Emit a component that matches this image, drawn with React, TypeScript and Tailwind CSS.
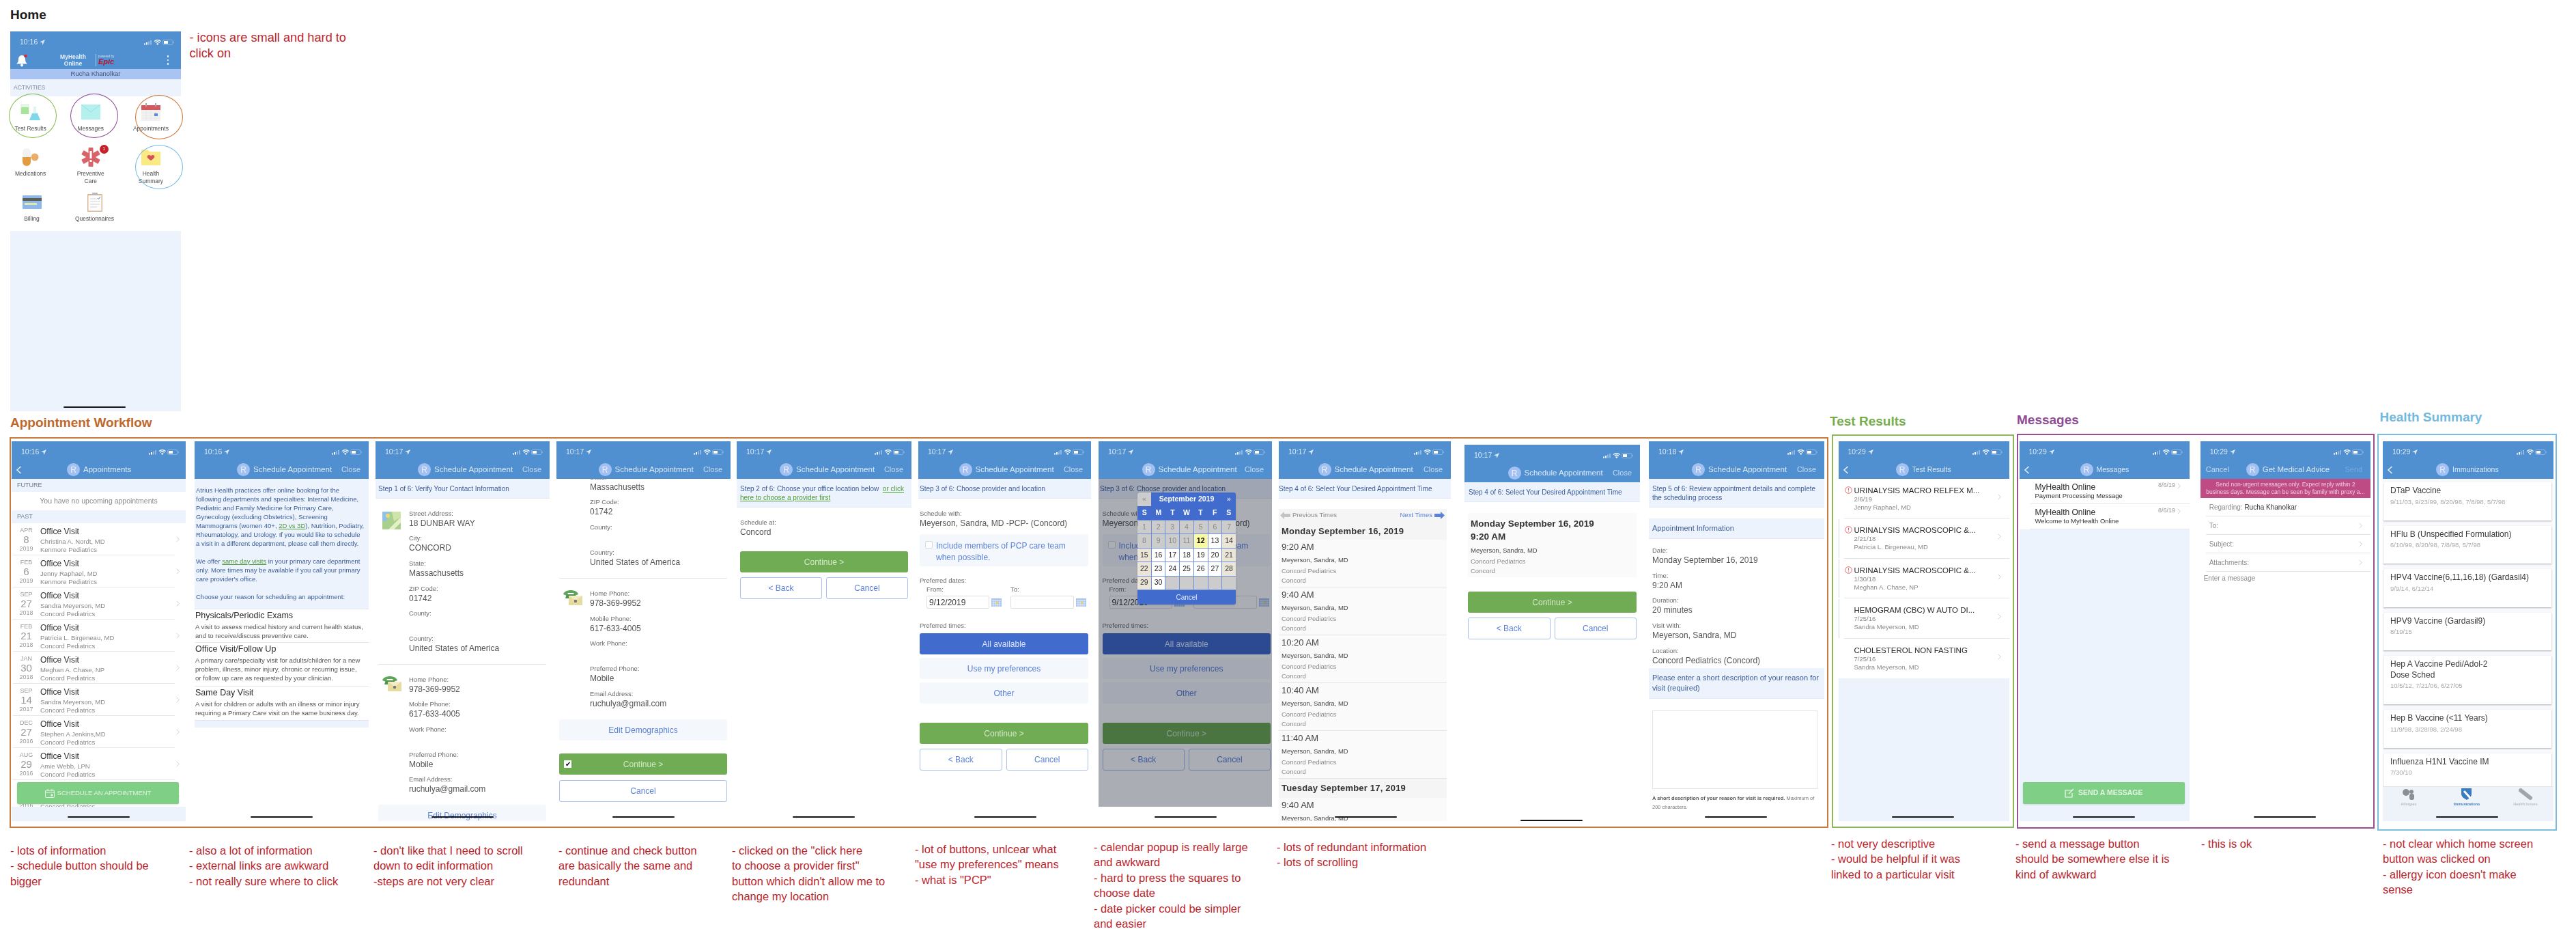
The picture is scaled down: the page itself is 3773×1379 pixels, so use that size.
import type { ReactNode } from "react"

const blue = "text-[#3b5c98]"

function StatusBar({ time }: { time: string }) {
    return (
        <div className="flex h-[32px] items-center justify-between pl-[14px] pr-[10px] text-[10.5px] text-[#dce8f6]">
            <div className="flex items-center gap-[3px]">
                <span>{time}</span>
                <svg width="8" height="8" viewBox="0 0 10 10" fill="#dce8f6"><path d="M10 0 0 4.5l4.6.9L5.5 10z" /></svg>
            </div>
            <svg width="44" height="10" viewBox="0 0 44 10" fill="none">
                <rect x="0" y="6.5" width="2" height="2" fill="#fff" />
                <rect x="3" y="5" width="2" height="3.5" fill="#fff" />
                <rect x="6" y="3.5" width="2" height="5" fill="#8fb8e4" />
                <rect x="9" y="2" width="2" height="6.5" fill="#8fb8e4" />
                <path d="M15 3.6a7 7 0 0 1 9.6 0M16.8 5.4a4.4 4.4 0 0 1 6 0" stroke="#fff" strokeWidth="1.3" />
                <path d="M19.8 9 18 6.9a2.8 2.8 0 0 1 3.6 0z" fill="#fff" />
                <rect x="27.5" y="1.5" width="14.5" height="7" rx="2" stroke="#9dc0e6" strokeWidth=".7" />
                <rect x="29" y="3" width="6" height="4" fill="#fff" />
                <rect x="42.6" y="3.8" width="1" height="2.4" fill="#9dc0e6" />
            </svg>
        </div>
    )
}

function Avatar() {
    return (
        <div className="flex h-[19px] w-[19px] shrink-0 items-center justify-center rounded-full bg-[#a3c0f2] text-[12px] text-[#e8f0fd]">R</div>
    )
}

function Back() {
    return (
        <svg width="9" height="12" viewBox="0 0 9 12" fill="none" className="ml-[6px]"><path d="M7.5 1 2 6l5.5 5" stroke="#e6eff9" strokeWidth="1.6" /></svg>
    )
}

function Header({ time, title, left, leftClass = "w-[62px]", right, size = "text-[11.5px]" }: { time: string; title: string; left?: ReactNode; leftClass?: string; right?: ReactNode; size?: string }) {
    return (
        <div className="relative z-10 h-[55px] bg-[#5090d0]">
            <StatusBar time={time} />
            <div className="flex h-[19px] items-center pr-[12px]">
                <div className={"flex shrink-0 items-center " + leftClass}>{left}</div>
                <Avatar />
                <span className={"ml-[5px] whitespace-nowrap text-[#dbe8f6] " + size}>{title}</span>
                {right && <span className="ml-auto text-[11px] text-[#c6d9ef]">{right}</span>}
            </div>
        </div>
    )
}

function HomeBar({ className = "left-[82px]" }: { className?: string }) {
    return <div className={"absolute bottom-[5px] z-20 h-[2px] w-[91px] rounded-full bg-[#151515] " + className} />
}

function Phone({ className, children }: { className: string; children: ReactNode }) {
    return <div className={"relative h-[556px] shrink-0 overflow-hidden bg-white blur-[0.35px] " + className}>{children}</div>
}

function StepBand({ className = "pl-[4px]", tall, children }: { className?: string; tall?: boolean; children: ReactNode }) {
    return (
        <div className={"flex items-center whitespace-nowrap border-b border-[#e3eaf5] bg-[#edf3fc] text-[10px] leading-[13px] " + blue + " " + (tall ? "h-[42px] " : "h-[29px] ") + className}>
            <div>{children}</div>
        </div>
    )
}

function Pair({ label, value }: { label: string; value?: string }) {
    return (
        <div className="h-[36.7px] whitespace-nowrap">
            <div className="text-[9.5px] leading-[15px] text-[#6a6a6a]">{label}</div>
            <div className="text-[12px] leading-[15px] text-[#555]">{value}</div>
        </div>
    )
}

function Green({ children, className = "" }: { children: ReactNode; className?: string }) {
    return <div className={"relative flex h-[31px] items-center justify-center rounded-[3px] bg-[#6fac54] text-[12px] text-[#d3e8c8] " + className}>{children}</div>
}

function Outline({ children, className = "" }: { children: ReactNode; className?: string }) {
    return <div className={"flex h-[32px] items-center justify-center rounded-[3px] border border-[#a9c1ee] text-[12px] text-[#5b82d8] " + className}>{children}</div>
}

function Soft({ children, className = "" }: { children: ReactNode; className?: string }) {
    return <div className={"flex h-[31px] items-center justify-center rounded-[3px] bg-[#f4f7fc] text-[12px] text-[#5b82d8] " + className}>{children}</div>
}

function BackCancel({ className = "" }: { className?: string }) {
    return (
        <div className={"flex gap-[6px] " + className}>
            <Outline className="flex-1">&lt; Back</Outline>
            <Outline className="flex-1">Cancel</Outline>
        </div>
    )
}

function MapIcon() {
    return (
        <svg width="29" height="29" viewBox="0 0 29 29">
            <rect x="1" y="2" width="27" height="26" fill="#a8d08a" />
            <path d="M1 2h12l-6 14H1z" fill="#8fc3e6" />
            <path d="M10 28 28 10v8L18 28z" fill="#e6f0c8" />
            <path d="M15 2h13v8L18 16z" fill="#cfe4a8" />
            <circle cx="9" cy="8" r="3" fill="#f0d878" />
        </svg>
    )
}

function PhoneIcon() {
    return (
        <svg width="29" height="24" viewBox="0 0 29 24">
            <path d="M1 8C3 0 21 0 23 8l-5 2-2-4H8L6 10z" fill="#5fa55a" />
            <path d="M6 8h12l3 6H4z" fill="#4d9450" />
            <rect x="9" y="10" width="20" height="14" fill="#e6dca0" />
            <path d="m9 10 10 7 10-7" fill="#f3ecc4" />
            <circle cx="19" cy="18" r="2.2" fill="#777" />
        </svg>
    )
}

function Checkbox() {
    return <div className="h-[11px] w-[11px] rounded-[2px] border border-[#d8d8d8] bg-white" />
}

function CalIcon() {
    return (
        <svg width="15" height="12" viewBox="0 0 15 12" className="shrink-0">
            <rect width="15" height="12" fill="#a9c4ee" />
            <path d="M.5 3h14M.5 6h14M.5 9h14M3 2v10M6 2v10M9 2v10M12 2v10" stroke="#e9f0fb" strokeWidth=".8" />
            <rect x="7" y="5" width="3" height="3" fill="#ecd94a" />
        </svg>
    )
}

function Provider({ pad, children }: { pad: string; children?: ReactNode }) {
    return (
        <>
            <StepBand className="pl-[2px]">Step 3 of 6: Choose provider and location</StepBand>
            <div className={"mt-[13.5px] " + pad}>
                <Pair label="Schedule with:" value="Meyerson, Sandra, MD -PCP- (Concord)" />
                <div className="mt-[2px] flex h-[47px] gap-[5px] rounded-[3px] bg-[#f4f7fc] pl-[8px] pt-[9px] text-[12px] leading-[17px] text-[#5b82d8]">
                    <div className="pt-[1px]"><Checkbox /></div>
                    <div className="whitespace-nowrap">Include members of PCP care team<br />when possible.</div>
                </div>
                <div className="mt-[12.5px] text-[9.5px] leading-[15px] text-[#6a6a6a]">Preferred dates:</div>
                <div className="flex pl-[10px] text-[9.5px] leading-[11px] text-[#6a6a6a]">
                    <div className="w-[123px]">From:</div>
                    <div>To:</div>
                </div>
                <div className="mt-[4.5px] flex items-center pl-[10px]">
                    <div className="flex h-[19px] w-[92px] items-center rounded-[2px] border border-[#dedede] pl-[3px] text-[12px] text-[#333]">9/12/2019</div>
                    <div className="ml-[3px] mr-[13px]"><CalIcon /></div>
                    <div className="h-[19px] w-[93px] rounded-[2px] border border-[#dedede]" />
                    <div className="ml-[3px]"><CalIcon /></div>
                </div>
                <div className="mt-[16.5px] text-[9.5px] leading-[15px] text-[#6a6a6a]">Preferred times:</div>
                <div className="mt-[4.5px] flex h-[31px] items-center justify-center rounded-[3px] bg-[#416bcc] text-[12px] text-[#dbe4f7]">All available</div>
                <Soft className="mt-[5px]">Use my preferences</Soft>
                <Soft className="mt-[5px]">Other</Soft>
                <Green className="mt-[28px]">Continue &gt;</Green>
                <BackCancel className="mt-[7px]" />
            </div>
            {children}
        </>
    )
}

function CalendarPopup() {
    const days = Array.from({ length: 35 }, (_, i) => i + 1)
    const cell = (d: number) => {
        if (d > 30) return "bg-[#cccccc]"
        if (d < 12) return "bg-[#cccccc] text-[#8a8a8a]"
        if (d === 12) return "bg-[#fbfaa0] font-bold text-black"
        if (d % 7 === 0 || d % 7 === 1) return "bg-[#ebe5d8] text-[#333]"
        return "bg-white text-[#222]"
    }
    return (
        <div className="absolute left-[57px] top-[75px] z-10 w-[144px] overflow-hidden rounded-[3px] bg-[#416bcc] shadow-sm">
            <div className="flex h-[20px] items-center text-[10.5px] font-bold text-white">
                <div className="flex h-[20px] w-[20px] items-center justify-center bg-[#cccccc] font-normal text-[#8a8a8a]">«</div>
                <div className="flex-1 text-center">September 2019</div>
                <div className="w-[20px] text-center font-normal">»</div>
            </div>
            <div className="grid h-[20px] grid-cols-7 items-center text-center text-[10.5px] font-bold text-white">
                {["S", "M", "T", "W", "T", "F", "S"].map((d, i) => <div key={i}>{d}</div>)}
            </div>
            <div className="grid grid-cols-7 gap-px bg-[#6f8fdb] py-px">
                {days.map((d) => (
                    <div key={d} className={"flex h-[19.4px] items-center justify-center text-[10.5px] " + cell(d)}>{d <= 30 ? d : ""}</div>
                ))}
            </div>
            <div className="flex h-[21px] items-center justify-center text-[10px] text-[#e3eafa]">Cancel</div>
        </div>
    )
}

function Slot({ time }: { time: string }) {
    return (
        <div className="h-[70px] border-b border-[#e6e6e6] pl-[4px] pt-[3px] whitespace-nowrap">
            <div className="text-[13px] leading-[15px] text-[#444]">{time}</div>
            <div className="mt-[6px] text-[9.5px] leading-[12px] text-[#444]">Meyerson, Sandra, MD</div>
            <div className="mt-[4px] text-[9.5px] leading-[12px] text-[#8a8a8a]">Concord Pediatrics</div>
            <div className="mt-[2px] text-[9.5px] leading-[12px] text-[#8a8a8a]">Concord</div>
        </div>
    )
}

const visits = [
    ["APR", "8", "2019", "Christina A. Nordt, MD", "Kenmore Pediatrics"],
    ["FEB", "6", "2019", "Jenny Raphael, MD", "Kenmore Pediatrics"],
    ["SEP", "27", "2018", "Sandra Meyerson, MD", "Concord Pediatrics"],
    ["FEB", "21", "2018", "Patricia L. Birgeneau, MD", "Concord Pediatrics"],
    ["JAN", "30", "2018", "Meghan A. Chase, NP", "Concord Pediatrics"],
    ["SEP", "14", "2017", "Sandra Meyerson, MD", "Concord Pediatrics"],
    ["DEC", "27", "2016", "Stephen A Jenkins,MD", "Concord Pediatrics"],
    ["AUG", "29", "2016", "Amie Webb, LPN", "Concord Pediatrics"],
    ["JUL", "12", "2016", "Sandra Meyerson, MD", "Concord Pediatrics"],
]

function Chevron({ className = "text-[#c4c4c4]" }: { className?: string }) {
    return (
        <svg width="5" height="9" viewBox="0 0 5 9" fill="none" className={className}><path d="m.7.7 3.6 3.8L.7 8.3" stroke="currentColor" strokeWidth=".8" /></svg>
    )
}

function VisitRow({ v }: { v: string[] }) {
    return (
        <div className="relative flex h-[47px] whitespace-nowrap">
            <div className="w-[42px] shrink-0 pl-[1px] text-center text-[#9a9a9a]">
                <div className="pt-[5px] text-[9px] leading-[11px]">{v[0]}</div>
                <div className="text-[15px] leading-[16px]">{v[1]}</div>
                <div className="text-[9px] leading-[11px]">{v[2]}</div>
            </div>
            <div className="pt-[5px]">
                <div className="text-[12px] leading-[15px] text-[#333]">Office Visit</div>
                <div className="mt-[1px] text-[9.5px] leading-[12px] text-[#8a8a8a]">{v[3]}</div>
                <div className="text-[9.5px] leading-[11px] text-[#8a8a8a]">{v[4]}</div>
            </div>
            <div className="absolute right-[9px] top-[19px]"><Chevron /></div>
            <div className="absolute bottom-0 left-[2px] w-[237px] border-b border-[#e8e8e8]" />
        </div>
    )
}

function GreenAction({ icon, children, className }: { icon: ReactNode; children: ReactNode; className: string }) {
    return (
        <div className={"absolute top-[499px] z-10 flex h-[32px] items-center justify-center gap-[4px] rounded-[2px] bg-[#80cf86] text-[9.5px] text-[#dff5e0] shadow-sm " + className}>
            {icon}
            <span>{children}</span>
        </div>
    )
}

function Bell() {
    return (
        <svg width="18" height="19" viewBox="0 0 18 19">
            <path d="M8 2c-3 0-5 2.500-5 6 0 3-1 5-3 6.500h16C14 13 13 11 13 8c0-3.500-2-6-5-6z" fill="#fff" />
            <circle cx="8" cy="16.500" r="2" fill="#fff" />
            <circle cx="13.500" cy="3" r="2.300" fill="#d92a2a" />
        </svg>
    )
}

function Flask() {
    return (
        <svg width="29" height="28" viewBox="0 0 29 28">
            <rect x="0" y="2" width="13" height="15" fill="#e8f4e8" />
            <rect x="1" y="7" width="11" height="10" fill="#a6e49a" />
            <path d="M19 6h4v7l6 13H13l6-13z" fill="#dff4f6" />
            <path d="M17 16h8l4 10H13z" fill="#7fd8ea" />
        </svg>
    )
}

function Envelope() {
    return (
        <svg width="28" height="22" viewBox="0 0 28 22">
            <rect width="28" height="22" fill="#b4f0ee" />
            <path d="m0 0 14 11L28 0" fill="none" stroke="#8fdcdc" strokeWidth=".8" />
        </svg>
    )
}

function Calendar28() {
    return (
        <svg width="28" height="26" viewBox="0 0 28 26">
            <rect y="3" width="28" height="23" fill="#f2f2f2" />
            <rect y="3" width="28" height="7" fill="#d4585c" />
            <path d="M0 14h28M0 18h28M0 22h28M7 10v16M14 10v16M21 10v16" stroke="#ddd" strokeWidth=".5" />
            <rect x="6" width="2" height="5" fill="#aaa" />
            <rect x="20" width="2" height="5" fill="#aaa" />
            <rect x="19" y="15" width="5" height="4" fill="#5b86d8" />
        </svg>
    )
}

function Pill() {
    return (
        <svg width="24" height="26" viewBox="0 0 24 26">
            <rect x="0" y="0" width="12" height="26" rx="6" fill="#f2f2f2" />
            <path d="M0 13h12v7a6 6 0 0 1-12 0z" fill="#e59a3f" />
            <circle cx="18" cy="13" r="5.500" fill="#ebad6a" />
        </svg>
    )
}

function StarOfLife() {
    return (
        <svg width="30" height="28" viewBox="0 0 30 28" fill="#d8646a">
            <rect x="11.500" y="0" width="7" height="28" rx="1" />
            <rect x="11.500" y="0" width="7" height="28" rx="1" transform="rotate(60 15 14)" />
            <rect x="11.500" y="0" width="7" height="28" rx="1" transform="rotate(120 15 14)" />
            <rect x="13.500" y="5" width="3" height="11" fill="#fff" />
            <rect x="13.500" y="18" width="3" height="3" fill="#fff" />
        </svg>
    )
}

function Folder() {
    return (
        <svg width="28" height="23" viewBox="0 0 28 23">
            <path d="M0 0h9l3 3h16v20H0z" fill="#fbe983" />
            <path d="M14 16c-9-5-5-10 0-7 5-3 9 2 0 7z" fill="#d4525c" />
        </svg>
    )
}

function Card() {
    return (
        <svg width="28" height="20" viewBox="0 0 28 20">
            <rect width="28" height="20" rx="1" fill="#8db8ea" />
            <rect y="4" width="28" height="4" fill="#5c5f55" />
            <rect x="3" y="11" width="18" height="3" fill="#e6e6b0" />
        </svg>
    )
}

function Clipboard() {
    return (
        <svg width="22" height="28" viewBox="0 0 22 28">
            <rect y="2" width="22" height="26" rx="1" fill="#d8b894" />
            <rect x="1.500" y="4" width="19" height="22.500" fill="#fdfdfd" />
            <path d="M4 9h10M4 13h14M4 17h14M4 21h10" stroke="#c8c8c8" strokeWidth=".8" />
            <rect x="7" width="8" height="4" fill="#bbb" />
            <path d="m15 8 1.500 1.500L19 6" stroke="#5b86d8" fill="none" />
        </svg>
    )
}

function Activity({ icon, label, badge }: { icon: ReactNode; label: ReactNode; badge?: boolean }) {
    return (
        <div className="flex h-[66px] w-[92px] flex-col items-center text-center text-[8.5px] leading-[10.5px] text-[#4a4a4a]">
            <div className="relative flex h-[28px] items-center justify-center">
                {icon}
                {badge && <div className="absolute -right-[11px] -top-[4px] flex h-[13px] w-[13px] items-center justify-center rounded-full bg-[#c71f26] text-[7px] text-white">1</div>}
            </div>
            <div className="mt-[5px]">{label}</div>
        </div>
    )
}

function HomePhone() {
    return (
        <div className="relative w-[250px] shrink-0">
            <Phone className="w-[250px]">
                <div className="h-[55px] bg-[#5090d0]">
                    <StatusBar time="10:16" />
                    <div className="flex h-[20px] items-center">
                        <div className="w-[63px] shrink-0 pl-[9px]"><Bell /></div>
                        <div className="w-[58px] text-center text-[8.5px] font-bold leading-[10px] text-[#e6eff9]">MyHealth<br />Online</div>
                        <div className="ml-[4px] flex h-[18px] flex-col justify-center border-l border-[#a9c9ea] pl-[3px]">
                            <div className="text-[4.5px] leading-[5px] text-[#cfe0f3]">powered by</div>
                            <div className="text-[11px] font-bold italic leading-[11px] text-[#b5122e]">Epic</div>
                        </div>
                        <div className="ml-auto mr-[18px] flex flex-col gap-[3px]">
                            <div className="h-[2.500px] w-[2.500px] rounded-full bg-white" />
                            <div className="h-[2.500px] w-[2.500px] rounded-full bg-white" />
                            <div className="h-[2.500px] w-[2.500px] rounded-full bg-white" />
                        </div>
                    </div>
                </div>
                <div className="flex h-[14.500px] items-center justify-center bg-[#a9c4f3] text-[9.500px] text-[#3f5272]">Rucha Khanolkar</div>
                <div className="flex h-[25.500px] items-center bg-[#edf3fc] pl-[5px] text-[8.500px] text-[#7c8aa0]">ACTIVITIES</div>
                <div className="flex h-[197px] flex-col pt-[9px]">
                    <div className="-ml-[14.500px] flex">
                        <Activity icon={<Flask />} label="Test Results" />
                        <Activity icon={<Envelope />} label="Messages" />
                        <Activity icon={<Calendar28 />} label="Appointments" />
                    </div>
                    <div className="-ml-[14.500px] flex">
                        <Activity icon={<Pill />} label="Medications" />
                        <Activity icon={<StarOfLife />} label={<>Preventive<br />Care</>} badge />
                        <Activity icon={<Folder />} label={<>Health<br />Summary</>} />
                    </div>
                    <div className="-ml-[14.500px] flex">
                        <Activity icon={<Card />} label="Billing" />
                        <Activity icon={<Clipboard />} label="Questionnaires" />
                    </div>
                </div>
                <div className="h-[264px] bg-[#edf3fc]" />
                <HomeBar className="left-[78px]" />
            </Phone>
            {/* hand drawn rings over the icons */}
            <div className="absolute -left-[2px] top-[91px] h-[65px] w-[70px] rounded-[50%] border border-[#86bb4e]" />
            <div className="absolute left-[88px] top-[91px] h-[65px] w-[70px] rounded-[50%] border border-[#8f4a95]" />
            <div className="absolute left-[182.500px] top-[93px] h-[65px] w-[70px] rounded-[50%] border border-[#cf7430]" />
            <div className="absolute left-[182.500px] top-[165.500px] h-[65px] w-[70px] rounded-[50%] border border-[#74bde2]" />
        </div>
    )
}

function InfoBlock({ title, lines, className }: { title: string; lines: string[]; className: string }) {
    return (
        <div className={"border-b border-[#e2e6ec] pl-[1px] whitespace-nowrap " + className}>
            <div className="text-[12.5px] leading-[19px] text-[#2a2a2a]">{title}</div>
            {lines.map((l) => <div key={l} className="text-[9.6px] leading-[13px] text-[#555]">{l}</div>)}
        </div>
    )
}

function AlertIcon() {
    return (
        <svg width="11" height="11" viewBox="0 0 11 11" fill="none">
            <circle cx="5.500" cy="5.500" r="4.800" stroke="#e2666a" />
            <path d="M5.500 2.500v3.800M5.500 7.500v1" stroke="#e2666a" />
        </svg>
    )
}

const tests = [
    ["URINALYSIS MACRO RELFEX M...", "2/6/19", "Jenny Raphael, MD", true],
    ["URINALYSIS MACROSCOPIC &...", "2/21/18", "Patricia L. Birgeneau, MD", true],
    ["URINALYSIS MACROSCOPIC &...", "1/30/18", "Meghan A. Chase, NP", true],
    ["HEMOGRAM (CBC) W AUTO DI...", "7/25/16", "Sandra Meyerson, MD", false],
    ["CHOLESTEROL NON FASTING", "7/25/16", "Sandra Meyerson, MD", false],
] as const

const shots = [
    ["DTaP Vaccine", "9/11/03, 9/23/99, 8/20/98, 7/8/98, 5/7/98"],
    ["HFlu B (Unspecified Formulation)", "6/10/99, 8/20/98, 7/8/98, 5/7/98"],
    ["HPV4 Vaccine(6,11,16,18) (Gardasil4)", "9/9/14, 6/12/14"],
    ["HPV9 Vaccine (Gardasil9)", "8/19/15"],
    ["Hep A Vaccine Pedi/Adol-2|Dose Sched", "10/5/12, 7/21/06, 6/27/05"],
    ["Hep B Vaccine (<11 Years)", "11/9/98, 3/28/98, 2/24/98"],
    ["Influenza H1N1 Vaccine IM", "7/30/10"],
]

function Note({ className, lines, size = "text-[16.5px]" }: { className: string; lines: string[]; size?: string }) {
    return (
        <div className={"shrink-0 whitespace-nowrap leading-[22.5px] text-[#b9252c] " + size + " " + className}>
            {lines.map((l, i) => <div key={i}>{l}</div>)}
        </div>
    )
}

function FieldRow({ children, chevron = true }: { children: ReactNode; chevron?: boolean }) {
    return (
        <div className="ml-[8px] flex h-[27px] items-center justify-between border-b border-[#e4e4e4] pl-[5px] pr-[12px] text-[10px] text-[#8a8a8a]">
            <div>{children}</div>
            {chevron && <Chevron />}
        </div>
    )
}

export default function App() {
    return (
        <div className="h-[1379px] w-[3773px] overflow-hidden bg-white font-['Liberation_Sans',sans-serif]">
            {/* Home */}
            <div className="-mb-[1px] pl-[15px] pt-[10px]">
                <h1 className="mb-[12px] text-[19px] font-bold leading-[24px] text-[#1c1c1c]">Home</h1>
                <div className="flex">
                    <HomePhone />
                    <Note className="-mt-[2px] ml-[12.500px]" size="text-[18.2px]" lines={["- icons are small and hard to", "click on"]} />
                </div>
            </div>

            {/* Flows */}
            <div className="flex items-start">
                <div className="ml-[14px] w-[2664px] shrink-0">
                    <h2 className="ml-[1px] mt-[8px] whitespace-nowrap text-[19px] font-bold leading-[20px] text-[#c0682a]">Appointment Workflow</h2>
                    <div className="mt-[11px] flex h-[572px] items-start border-2 border-[#c87a3c] pl-[1px] pt-[4px]">
                        <Phone className="w-[255px]">
                            <Header time="10:16" title="Appointments" left={<Back />} leftClass="w-[81px]" />
                            <div className="flex h-[19px] items-center bg-[#edf3fc] pl-[8px] text-[9px] text-[#6f7f93]">FUTURE</div>
                            <div className="flex h-[27px] items-center justify-center text-[10.500px] text-[#8a8a8a]">You have no upcoming appointments</div>
                            <div className="flex h-[18.500px] items-center bg-[#edf3fc] pl-[8px] text-[9px] text-[#6f7f93]">PAST</div>
                            <div className="h-[415.500px] overflow-hidden">
                                {visits.map((v, i) => <VisitRow key={i} v={v} />)}
                            </div>
                            <div className="h-[21px] bg-[#edf3fc]" />
                            <GreenAction
                                className="left-[8px] w-[237px]"
                                icon={<svg width="14" height="13" viewBox="0 0 14 13" fill="none" stroke="#e6f7e7"><rect x=".5" y="2" width="13" height="10.500" rx="1" /><path d="M.5 5h13M4 0v3M10 0v3" /><rect x="9" y="8" width="2" height="2" fill="#e6f7e7" /></svg>}
                            >SCHEDULE AN APPOINTMENT</GreenAction>
                            <HomeBar />
                        </Phone>

                        <Phone className="ml-[13px] w-[255px]">
                            <Header time="10:16" title="Schedule Appointment" right="Close" />
                            <div className={"h-[190px] whitespace-nowrap bg-[#edf3fc] pl-[2px] pt-[9.500px] text-[9.5px] leading-[13px] " + blue}>
                                <div>Atrius Health practices offer online booking for the</div>
                                <div>following departments and specialties: Internal Medicine,</div>
                                <div>Pediatric and Family Medicine for Primary Care,</div>
                                <div>Gynecology (excluding Obstetrics), Screening</div>
                                <div>Mammograms (women 40+, <span className="text-[#4f9a3a] underline">2D vs 3D</span>), Nutrition, Podiatry,</div>
                                <div>Rheumatology, and Urology. If you would like to schedule</div>
                                <div>a visit in a different department, please call them directly.</div>
                                <div className="mt-[13px]">We offer <span className="text-[#4f9a3a] underline">same day visits</span> in your primary care department</div>
                                <div>only. More times may be available if you call your primary</div>
                                <div>care provider's office.</div>
                                <div className="mt-[13px]">Choose your reason for scheduling an appointment:</div>
                            </div>
                            <InfoBlock className="h-[50px] border-t" title="Physicals/Periodic Exams" lines={["A visit to assess medical history and current health status,", "and to receive/discuss preventive care."]} />
                            <InfoBlock className="h-[64px]" title="Office Visit/Follow Up" lines={["A primary care/specialty visit for adults/children for a new", "problem, illness, minor injury, chronic or recurring issue,", "or follow up care as requested by your clinician."]} />
                            <InfoBlock className="h-[50px]" title="Same Day Visit" lines={["A visit for children or adults with an illness or minor injury", "requiring a Primary Care visit on the same business day."]} />
                            <div className="h-[10px] bg-[#edf3fc]" />
                            <HomeBar />
                        </Phone>

                        <Phone className="ml-[10px] w-[255px]">
                            <Header time="10:17" title="Schedule Appointment" right="Close" />
                            <StepBand>Step 1 of 6: Verify Your Contact Information</StepBand>
                            <div className="mt-[13.500px] flex">
                                <div className="w-[49px] shrink-0 pl-[9px] pt-[3px]"><MapIcon /></div>
                                <div>
                                    <Pair label="Street Address:" value="18 DUNBAR WAY" />
                                    <Pair label="City:" value="CONCORD" />
                                    <Pair label="State:" value="Massachusetts" />
                                    <Pair label="ZIP Code:" value="01742" />
                                    <Pair label="County:" />
                                    <Pair label="Country:" value="United States of America" />
                                </div>
                            </div>
                            <div className="ml-[4px] mr-[5px] mt-[8px] border-b border-[#e4e4e4]" />
                            <div className="mt-[14px] flex">
                                <div className="w-[49px] shrink-0 pl-[9px] pt-[1px]"><PhoneIcon /></div>
                                <div>
                                    <Pair label="Home Phone:" value="978-369-9952" />
                                    <Pair label="Mobile Phone:" value="617-633-4005" />
                                    <Pair label="Work Phone:" />
                                    <Pair label="Preferred Phone:" value="Mobile" />
                                    <Pair label="Email Address:" value="ruchulya@gmail.com" />
                                </div>
                            </div>
                            <Soft className="ml-[4px] mr-[5px] mt-[8px]">Edit Demographics</Soft>
                            <HomeBar />
                        </Phone>

                        <Phone className="ml-[10px] w-[255px]">
                            <Header time="10:17" title="Schedule Appointment" leftClass="w-[61.500px]" right="Close" />
                            <div className="-mt-[10.500px] flex">
                                <div className="w-[49px] shrink-0" />
                                <div>
                                    <Pair label="State:" value="Massachusetts" />
                                    <Pair label="ZIP Code:" value="01742" />
                                    <Pair label="County:" />
                                    <Pair label="Country:" value="United States of America" />
                                </div>
                            </div>
                            <div className="ml-[4px] mr-[5px] mt-[8.700px] border-b border-[#e4e4e4]" />
                            <div className="mt-[14px] flex">
                                <div className="w-[49px] shrink-0 pl-[9px] pt-[1px]"><PhoneIcon /></div>
                                <div>
                                    <Pair label="Home Phone:" value="978-369-9952" />
                                    <Pair label="Mobile Phone:" value="617-633-4005" />
                                    <Pair label="Work Phone:" />
                                    <Pair label="Preferred Phone:" value="Mobile" />
                                    <Pair label="Email Address:" value="ruchulya@gmail.com" />
                                </div>
                            </div>
                            <div className="ml-[4px] mr-[5px]">
                                <Soft className="mt-[9px]">Edit Demographics</Soft>
                                <Green className="mt-[19px]">
                                    <div className="absolute left-[7px] top-[10px] flex h-[11px] w-[11px] items-center justify-center bg-white text-[10px] leading-none text-black">✔</div>
                                    Continue &gt;
                                </Green>
                                <Outline className="mt-[8px] h-[31px]">Cancel</Outline>
                            </div>
                            <HomeBar />
                        </Phone>

                        <Phone className="ml-[9px] w-[256px]">
                            <Header time="10:17" title="Schedule Appointment" leftClass="w-[63px]" right="Close" />
                            <StepBand tall className="pl-[5px]">
                                Step 2 of 6: Choose your office location below&nbsp; <span className="text-[#4f9a3a] underline">or click</span><br />
                                <span className="text-[#4f9a3a] underline">here to choose a provider first</span>
                            </StepBand>
                            <div className="ml-[5px] mr-[5px] mt-[13.500px]">
                                <Pair label="Schedule at:" value="Concord" />
                                <Green className="mt-[14px]">Continue &gt;</Green>
                                <BackCancel className="mt-[7px]" />
                            </div>
                            <HomeBar />
                        </Phone>

                        <Phone className="ml-[10px] w-[253px]">
                            <Header time="10:17" title="Schedule Appointment" leftClass="w-[59.500px]" right="Close" />
                            <Provider pad="pl-[2px] pr-[4px]" />
                            <HomeBar />
                        </Phone>

                        <Phone className="ml-[11px] w-[254px]">
                            <Header time="10:17" title="Schedule Appointment" leftClass="w-[63.500px]" right="Close" />
                            <Provider pad="pl-[5.500px] pr-[2px]" />
                            <div className="absolute inset-x-0 top-[55px] h-[480px] bg-[#00061a]/[0.33]" />
                            <CalendarPopup />
                            <div className="absolute inset-x-0 top-[535px] h-[21px] bg-white" />
                            <HomeBar />
                        </Phone>

                        <Phone className="ml-[10px] w-[252px]">
                            <Header time="10:17" title="Schedule Appointment" leftClass="w-[57.500px]" right="Close" />
                            <StepBand className="pl-0">Step 4 of 6: Select Your Desired Appointment Time</StepBand>
                            <div className="mt-[15px] w-[246px] bg-[#fafafa]">
                                <div className="h-[45px] whitespace-nowrap bg-[#f5f5f5]">
                                    <div className="flex h-[18px] items-center pl-[2px] pr-[3px] text-[9.500px]">
                                        <svg width="15" height="11" viewBox="0 0 15 11" fill="#c4c4c4"><path d="M0 5.500 6 0v3h9v5H6v3z" /></svg>
                                        <span className="ml-[3px] text-[#8a8a8a]">Previous Times</span>
                                        <span className="ml-auto text-[#5b82d8]">Next Times</span>
                                        <svg width="15" height="11" viewBox="0 0 15 11" fill="#5b82d8" className="ml-[3px]"><path d="M15 5.500 9 0v3H0v5h9v3z" /></svg>
                                    </div>
                                    <div className="pl-[4px] pt-[7px] text-[13px] font-bold leading-[15px] tracking-[0.2px] text-[#333]">Monday September 16, 2019</div>
                                </div>
                                <Slot time="9:20 AM" />
                                <Slot time="9:40 AM" />
                                <Slot time="10:20 AM" />
                                <Slot time="10:40 AM" />
                                <Slot time="11:40 AM" />
                                <div className="flex h-[28px] items-center whitespace-nowrap bg-[#f5f5f5] pl-[4px] text-[13px] font-bold tracking-[0.2px] text-[#333]">Tuesday September 17, 2019</div>
                                <Slot time="9:40 AM" />
                            </div>
                            <HomeBar />
                        </Phone>

                        <Phone className="ml-[20px] mt-[5px] w-[257px]">
                            <Header time="10:17" title="Schedule Appointment" leftClass="w-[63.500px]" right="Close" />
                            <StepBand className="pl-[6px]">Step 4 of 6: Select Your Desired Appointment Time</StepBand>
                            <div className="mx-[5px] mt-[16px] h-[94px] whitespace-nowrap bg-[#fafafa] pl-[4px] pt-[6px]">
                                <div className="text-[13.500px] font-bold leading-[19px] text-[#333]">Monday September 16, 2019</div>
                                <div className="text-[13.500px] font-bold leading-[19px] text-[#333]">9:20 AM</div>
                                <div className="mt-[5px] text-[9.500px] leading-[12px] text-[#444]">Meyerson, Sandra, MD</div>
                                <div className="mt-[4px] text-[9.500px] leading-[12px] text-[#8a8a8a]">Concord Pediatrics</div>
                                <div className="mt-[2px] text-[9.500px] leading-[12px] text-[#8a8a8a]">Concord</div>
                            </div>
                            <div className="mx-[5px]">
                                <Green className="mt-[21px]">Continue &gt;</Green>
                                <BackCancel className="mt-[7px]" />
                            </div>
                            <HomeBar />
                        </Phone>

                        <Phone className="ml-[13px] w-[257px]">
                            <Header time="10:18" title="Schedule Appointment" leftClass="w-[63px]" right="Close" />
                            <StepBand tall className="pl-[5px]">Step 5 of 6: Review appointment details and complete<br />the scheduling process</StepBand>
                            <div className={"mt-[15.500px] flex h-[30.500px] items-center border-b border-[#e3eaf5] bg-[#edf3fc] pl-[5px] text-[11px] " + blue}>Appointment Information</div>
                            <div className="mt-[9px] pl-[5px]">
                                <Pair label="Date:" value="Monday September 16, 2019" />
                                <Pair label="Time:" value="9:20 AM" />
                                <Pair label="Duration:" value="20 minutes" />
                                <Pair label="Visit With:" value="Meyerson, Sandra, MD" />
                                <Pair label="Location:" value="Concord Pediatrics (Concord)" />
                            </div>
                            <div className={"-mt-[3.500px] flex h-[45px] items-center whitespace-nowrap border-b border-[#e3eaf5] bg-[#edf3fc] pl-[5px] text-[11px] leading-[15px] " + blue}>
                                <div>Please enter a short description of your reason for<br />visit (required)</div>
                            </div>
                            <div className="ml-[5px] mt-[17px] h-[115.500px] w-[241.500px] border border-[#e4e4e4]" />
                            <div className="ml-[5px] mt-[7px] whitespace-nowrap text-[7.500px] leading-[13px] text-[#777]">
                                <span className="font-bold text-[#555]">A short description of your reason for visit is required.</span> Maximum of<br />200 characters.
                            </div>
                            <HomeBar />
                        </Phone>
                    </div>
                </div>

                <div className="ml-[5px] w-[267px] shrink-0">
                    <h2 className="-ml-[3px] mt-[5.500px] text-[19px] font-bold leading-[20px] text-[#76ad4d]">Test Results</h2>
                    <div className="mt-[9.500px] h-[576px] border-2 border-[#8cb85a] pl-[7.500px] pt-[8px]">
                        <Phone className="w-[250px]">
                            <Header time="10:29" title="Test Results" left={<Back />} leftClass="w-[84px]" size="text-[10.500px]" />
                            {tests.map((t, i) => (
                                <div key={i} className="relative flex h-[58.400px] whitespace-nowrap pl-[9.500px]">
                                    {i > 0 && i < 4 && <div className="absolute bottom-[1px] left-0 top-[1px] w-px bg-[#c9d9f2]" />}
                                    <div className="w-[13.500px] shrink-0 pt-[11px]">{t[3] && <AlertIcon />}</div>
                                    <div className="pt-[9px]">
                                        <div className="text-[11.500px] leading-[16px] text-[#2a2a2a]">{t[0]}</div>
                                        <div className="mt-[-1px] text-[9.500px] leading-[12px] text-[#8a8a8a]">{t[1]}</div>
                                        <div className="text-[9.500px] leading-[11px] text-[#8a8a8a]">{t[2]}</div>
                                    </div>
                                    <div className="absolute left-[233px] top-[22px]"><Chevron /></div>
                                    {i < 4 && <div className="absolute bottom-0 left-[8px] right-0 border-b border-[#e4e4e4]" />}
                                </div>
                            ))}
                            <div className="h-[210px] bg-[#edf3fc]" />
                            <HomeBar className="left-[78px]" />
                        </Phone>
                    </div>
                </div>

                <div className="ml-[4px] w-[524px] shrink-0">
                    <h2 className="mt-[4px] text-[19px] font-bold leading-[20px] text-[#8e4c94]">Messages</h2>
                    <div className="mt-[10px] flex h-[578px] items-start border-2 border-[#9a4f92] pl-[1.500px] pt-[9px]">
                        <Phone className="w-[249.500px]">
                            <Header time="10:29" title="Messages" left={<Back />} leftClass="w-[89px]" size="text-[10.500px]" />
                            {[["Payment Processing Message"], ["Welcome to MyHealth Online"]].map((m, i) => (
                                <div key={i} className="ml-[16px] flex h-[37.200px] justify-between border-b border-[#e4e8ee] pl-[7px] pr-[13px] pt-[5px] whitespace-nowrap">
                                    <div>
                                        <div className="text-[12px] leading-[14px] text-[#2a2a2a]">MyHealth Online</div>
                                        <div className="text-[9.500px] leading-[12px] text-[#333]">{m[0]}</div>
                                    </div>
                                    <div className="flex h-[10px] items-center gap-[3px] text-[9px] text-[#999]">8/6/19 <Chevron /></div>
                                </div>
                            ))}
                            <div className="h-[427px] bg-[#edf3fc]" />
                            <GreenAction
                                className="left-[5px] w-[237.500px] text-[10.500px] font-bold"
                                icon={<svg width="16" height="14" viewBox="0 0 16 14" fill="none" stroke="#f0fbf0"><path d="M11 3H1v10h10V7M6 8l7-7" strokeWidth="1.200" /></svg>}
                            >SEND A MESSAGE</GreenAction>
                            <HomeBar className="left-[78px]" />
                        </Phone>

                        <Phone className="ml-[15.700px] w-[249.500px]">
                            <Header time="10:29" title="Get Medical Advice" left={<span className="ml-[8px] text-[11px] text-[#c6d9ef]">Cancel</span>} leftClass="w-[67px]" right={<span className="text-[#79a9dc]">Send</span>} />
                            <div className="flex h-[28px] flex-col items-center justify-center whitespace-nowrap bg-[#be4b84] text-[8.500px] leading-[11px] text-[#f2cfe0]">
                                <div>Send non-urgent messages only. Expect reply within 2</div>
                                <div>business days. Message can be seen by family with proxy a...</div>
                            </div>
                            <FieldRow chevron={false}>Regarding: <span className="text-[#333]">Rucha Khanolkar</span></FieldRow>
                            <FieldRow>To:</FieldRow>
                            <FieldRow>Subject:</FieldRow>
                            <FieldRow>Attachments:</FieldRow>
                            <div className="pl-[5px] pt-[4px] text-[10px] leading-[12px] text-[#8a8a8a]">Enter a message</div>
                            <HomeBar className="left-[78px]" />
                        </Phone>
                    </div>
                </div>

                <div className="ml-[4px] w-[263px] shrink-0">
                    <h2 className="ml-[3.500px] text-[19px] font-bold leading-[20px] text-[#73b8dd]">Health Summary</h2>
                    <div className="mt-[13.500px] h-[581px] border-2 border-[#79bde0] pl-[6px] pt-[9.500px]">
                        <Phone className="w-[250px]">
                            <Header time="10:29" title="Immunizations" left={<Back />} leftClass="w-[78px]" size="text-[10.500px]" />
                            <div className="flex h-[501px] flex-col gap-[8px] overflow-hidden bg-[#f7f9fc] pl-[1px] pr-[3px] pt-[5px]">
                                {shots.map((s) => {
                                    const parts = s[0].split("|")
                                    return (
                                        <div key={s[0]} className={"shrink-0 whitespace-nowrap bg-white pl-[10px] pt-[5px] shadow-[0_1px_2px_rgba(0,0,0,0.3)] " + (parts.length > 1 ? "h-[71px]" : "h-[55.500px]")}>
                                            {parts.map((p) => <div key={p} className="text-[12px] leading-[15.500px] text-[#3a3a3a]">{p}</div>)}
                                            <div className="mt-[1px] text-[9.500px] leading-[14px] text-[#aaa]">{s[1]}</div>
                                        </div>
                                    )
                                })}
                            </div>
                            <div className="absolute inset-x-0 top-[505px] flex h-[51px] border-t border-[#dfe5ec] bg-[#eef3f9] pt-[2px] text-center text-[5.500px] font-bold">
                                <div className="flex w-[76px] flex-col items-center text-[#b5bcc4]">
                                    <svg width="20" height="17" viewBox="0 0 20 17" fill="#8a8f94"><circle cx="6" cy="6" r="5" /><circle cx="14" cy="5" r="3" /><rect x="11" y="8" width="7" height="9" rx="3" /></svg>
                                    <span className="mt-[2px]">Allergies</span>
                                </div>
                                <div className="ml-[10px] flex w-[74px] flex-col items-center text-[#3a7cc0]">
                                    <svg width="20" height="17" viewBox="0 0 20 17"><path d="M2 0h15v8c0 5-4 7-7 9-3-2-8-4-8-9z" fill="#3a7cc0" /><path d="m6 4 9 10" stroke="#fff" strokeWidth="3" /></svg>
                                    <span className="mt-[2px]">Immunizations</span>
                                </div>
                                <div className="ml-[12px] flex w-[74px] flex-col items-center text-[#b5bcc4]">
                                    <svg width="20" height="17" viewBox="0 0 20 17"><path d="m3 3 14 11" stroke="#a0a5aa" strokeWidth="6" strokeLinecap="round" /></svg>
                                    <span className="mt-[2px]">Health Issues</span>
                                </div>
                            </div>
                            <HomeBar className="left-[78px]" />
                        </Phone>
                    </div>
                </div>
            </div>

            {/* Comments */}
            <div className="flex items-start">
                <Note className="ml-[15px] mt-[18px] w-[262px]" lines={["- lots of information", "- schedule button should be", "bigger"]} />
                <Note className="mt-[18px] w-[270px]" lines={["- also a lot of information", "- external links are awkward", "- not really sure where to click"]} />
                <Note className="mt-[18px] w-[271px]" lines={["- don't like that I need to scroll", "down to edit information", "-steps are not very clear"]} />
                <Note className="mt-[18px] w-[254px]" lines={["- continue and check button", "are basically the same and", "redundant"]} />
                <Note className="mt-[18px] w-[268px]" lines={["- clicked on the \"click here", "to choose a provider first\"", "button which didn't allow me to", "change my location"]} />
                <Note className="mt-[16px] w-[262px]" lines={["- lot of buttons, unlcear what", "\"use my preferences\" means", "- what is \"PCP\""]} />
                <Note className="mt-[13px] w-[268px]" lines={["- calendar popup is really large", "and awkward", "- hard to press the squares to", "choose date", "- date picker could be simpler", "and easier"]} />
                <Note className="mt-[13px] w-[812px]" lines={["- lots of redundant information", "- lots of scrolling"]} />
                <Note className="mt-[8px] w-[270px]" lines={["- not very descriptive", "- would be helpful if it was", "linked to a particular visit"]} />
                <Note className="mt-[8px] w-[272px]" lines={["- send a message button", "should be somewhere else it is", "kind of awkward"]} />
                <Note className="mt-[8px] w-[266px]" lines={["- this is ok"]} />
                <Note className="mt-[8px] w-[283px]" lines={["- not clear which home screen", "button was clicked on", "- allergy icon doesn't make", "sense"]} />
            </div>
        </div>
    )
}
